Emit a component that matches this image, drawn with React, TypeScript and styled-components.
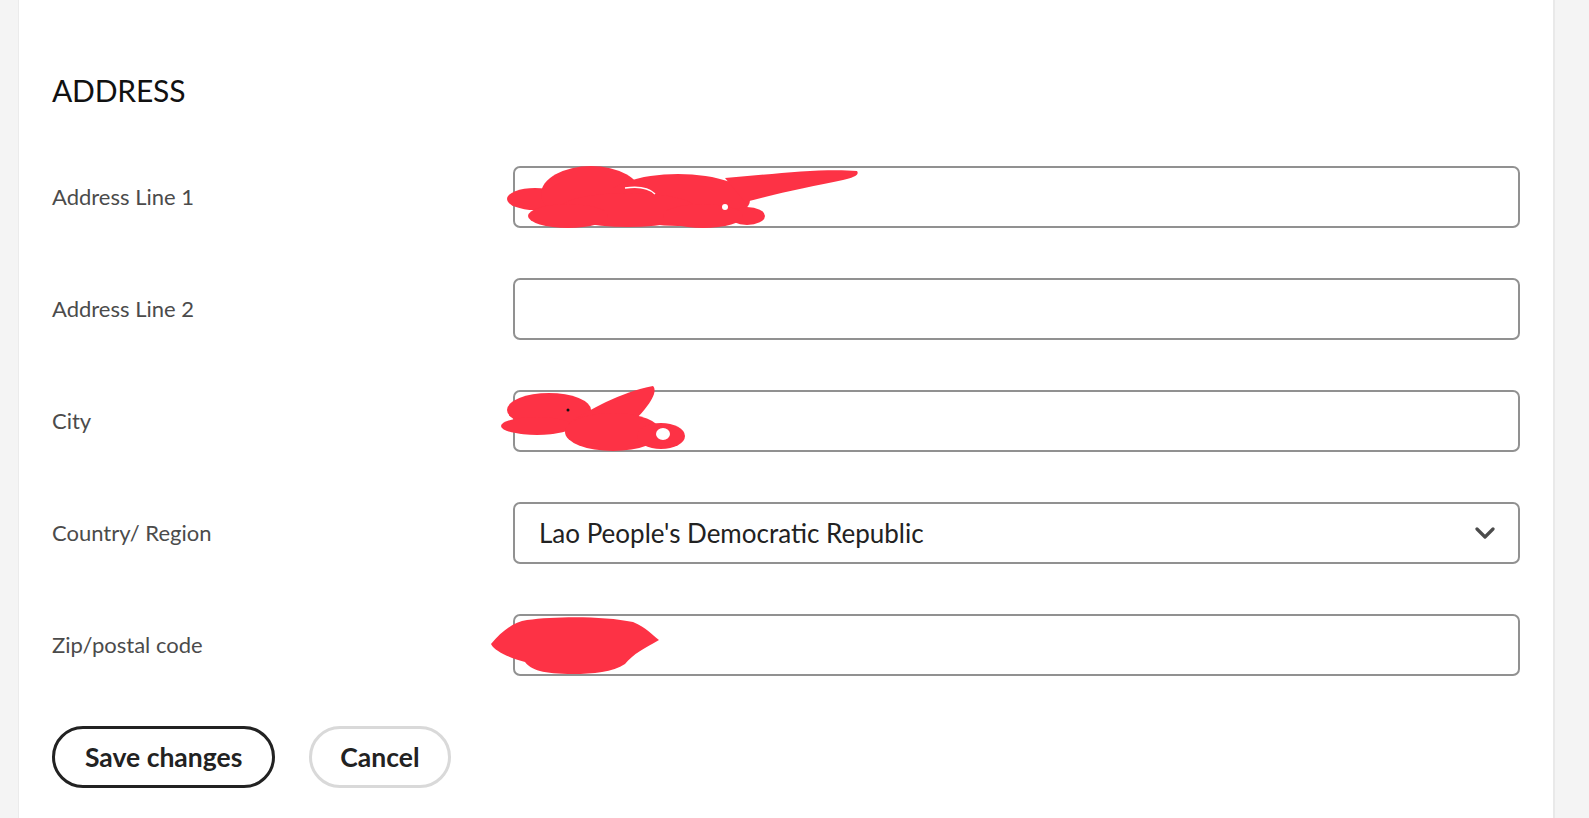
import React from "react";
import styled, { createGlobalStyle } from "styled-components";

const GlobalStyle = createGlobalStyle`
  html, body {
    margin: 0;
    padding: 0;
    background: #f4f4f4;
  }
  body {
    font-family: Lato, "Open Sans", "Liberation Sans", sans-serif;
    overflow: hidden;
  }
  * { box-sizing: border-box; }
`;

const Page = styled.div`
  min-height: 818px;
  padding-left: 18px;
  display: flex;
`;

const Card = styled.section`
  width: 1537px;
  min-height: 818px;
  background: #ffffff;
  border-left: 1px solid #ebebeb;
  border-right: 2px solid #e9e9e9;
  padding: 72px 33px 0 33px;
`;

const Heading = styled.h2`
  margin: 0 0 58px 0;
  font-size: 30px;
  line-height: 36px;
  font-weight: 400;
  color: #111111;
  letter-spacing: -0.2px;
`;

const Form = styled.form`
  display: flex;
  flex-direction: column;
  gap: 50px;
`;

const Row = styled.div`
  display: grid;
  grid-template-columns: 461px 1fr;
  align-items: center;
`;

const Label = styled.label`
  font-size: 22px;
  color: #4b4b4b;
  line-height: 26px;
`;

const Field = styled.div`
  position: relative;
  height: 62px;
`;

const TextInput = styled.input`
  width: 100%;
  height: 62px;
  border: 2px solid #919191;
  border-radius: 7px;
  background: #fff;
  padding: 0 24px;
  font-family: inherit;
  font-size: 26px;
  color: #222;
  outline: none;
`;

const Select = styled.select`
  appearance: none;
  -webkit-appearance: none;
  width: 100%;
  height: 62px;
  border: 2px solid #919191;
  border-radius: 7px;
  background: #fff;
  padding: 0 60px 0 24px;
  font-family: inherit;
  font-size: 26px;
  color: #222;
  outline: none;
`;

const Chevron = styled.svg`
  position: absolute;
  right: 25px;
  top: 25px;
  width: 20px;
  height: 13px;
  pointer-events: none;
`;

const Scribble = styled.svg`
  position: absolute;
  left: 0;
  top: 0;
  width: 1px;
  height: 1px;
  overflow: visible;
  pointer-events: none;
`;

const Buttons = styled.div`
  display: flex;
  gap: 34px;
  margin-top: 50px;
`;

const Pill = styled.button<{ $variant: "primary" | "secondary" }>`
  height: 62px;
  padding: 0 ${(p) => (p.$variant === "primary" ? "30px" : "28px")};
  border-radius: 31px;
  border: 3px solid ${(p) => (p.$variant === "primary" ? "#222222" : "#d9d9d9")};
  background: #fff;
  font-family: inherit;
  font-size: 26.5px;
  font-weight: 700;
  color: #222222;
  cursor: pointer;
`;

const RED = "#fd3245";

const Redact1 = () => (
  <Scribble>
    <g fill={RED}>
      <ellipse cx="22" cy="33" rx="28" ry="11" />
      <ellipse cx="78" cy="28" rx="50" ry="28" />
      <ellipse cx="165" cy="34" rx="72" ry="26" />
      <ellipse cx="115" cy="44" rx="70" ry="17" />
      <path d="M212 12 C260 8 310 2 344 5 C347 9 340 12 330 14 C300 20 262 28 232 36 Z" />
      <ellipse cx="234" cy="50" rx="18" ry="9" />
      <ellipse cx="55" cy="50" rx="40" ry="12" />
      <ellipse cx="190" cy="50" rx="40" ry="12" />
    </g>
    <path d="M112 22 C126 20 136 22 142 28" stroke="#fff" strokeWidth="1.5" fill="none" />
    <circle cx="212" cy="41" r="3" fill="#fff" />
  </Scribble>
);

const Redact2 = () => (
  <Scribble>
    <g fill={RED}>
      <ellipse cx="36" cy="20" rx="42" ry="17" />
      <ellipse cx="24" cy="36" rx="36" ry="9" />
      <path d="M55 34 C75 20 108 2 140 -4 C146 2 134 18 122 30 C104 40 78 42 55 34 Z" />
      <ellipse cx="100" cy="42" rx="48" ry="19" />
      <ellipse cx="148" cy="46" rx="24" ry="13" />
    </g>
    <ellipse cx="150" cy="44" rx="7" ry="6" fill="#fff" />
    <circle cx="55" cy="20" r="1.5" fill="#111" />
  </Scribble>
);

const Redact3 = () => (
  <Scribble>
    <g fill={RED}>
      <path d="M-22 30 C-12 18 0 8 14 6 C44 2 92 2 120 8 C134 14 138 20 146 26 C132 34 120 40 112 50 C100 58 80 60 60 60 C30 60 18 56 12 48 C-2 44 -18 38 -22 30 Z" />
    </g>
  </Scribble>
);

export default function App() {
  return (
    <>
      <GlobalStyle />
      <Page>
        <Card>
          <Heading>ADDRESS</Heading>
          <Form onSubmit={(e) => e.preventDefault()}>
            <Row>
              <Label htmlFor="a1">Address Line 1</Label>
              <Field>
                <TextInput id="a1" defaultValue="" />
                <Redact1 />
              </Field>
            </Row>
            <Row>
              <Label htmlFor="a2">Address Line 2</Label>
              <Field>
                <TextInput id="a2" defaultValue="" />
              </Field>
            </Row>
            <Row>
              <Label htmlFor="city">City</Label>
              <Field>
                <TextInput id="city" defaultValue="" />
                <Redact2 />
              </Field>
            </Row>
            <Row>
              <Label htmlFor="country">Country/ Region</Label>
              <Field>
                <Select id="country" defaultValue="LA">
                  <option value="LA">Lao People's Democratic Republic</option>
                </Select>
                <Chevron viewBox="0 0 20 13">
                  <path d="M2 2 L10 10 L18 2" stroke="#4b4b4b" strokeWidth="3.2" fill="none" strokeLinecap="round" strokeLinejoin="round" />
                </Chevron>
              </Field>
            </Row>
            <Row>
              <Label htmlFor="zip">Zip/postal code</Label>
              <Field>
                <TextInput id="zip" defaultValue="" />
                <Redact3 />
              </Field>
            </Row>
          </Form>
          <Buttons>
            <Pill type="button" $variant="primary">Save changes</Pill>
            <Pill type="button" $variant="secondary">Cancel</Pill>
          </Buttons>
        </Card>
      </Page>
    </>
  );
}
